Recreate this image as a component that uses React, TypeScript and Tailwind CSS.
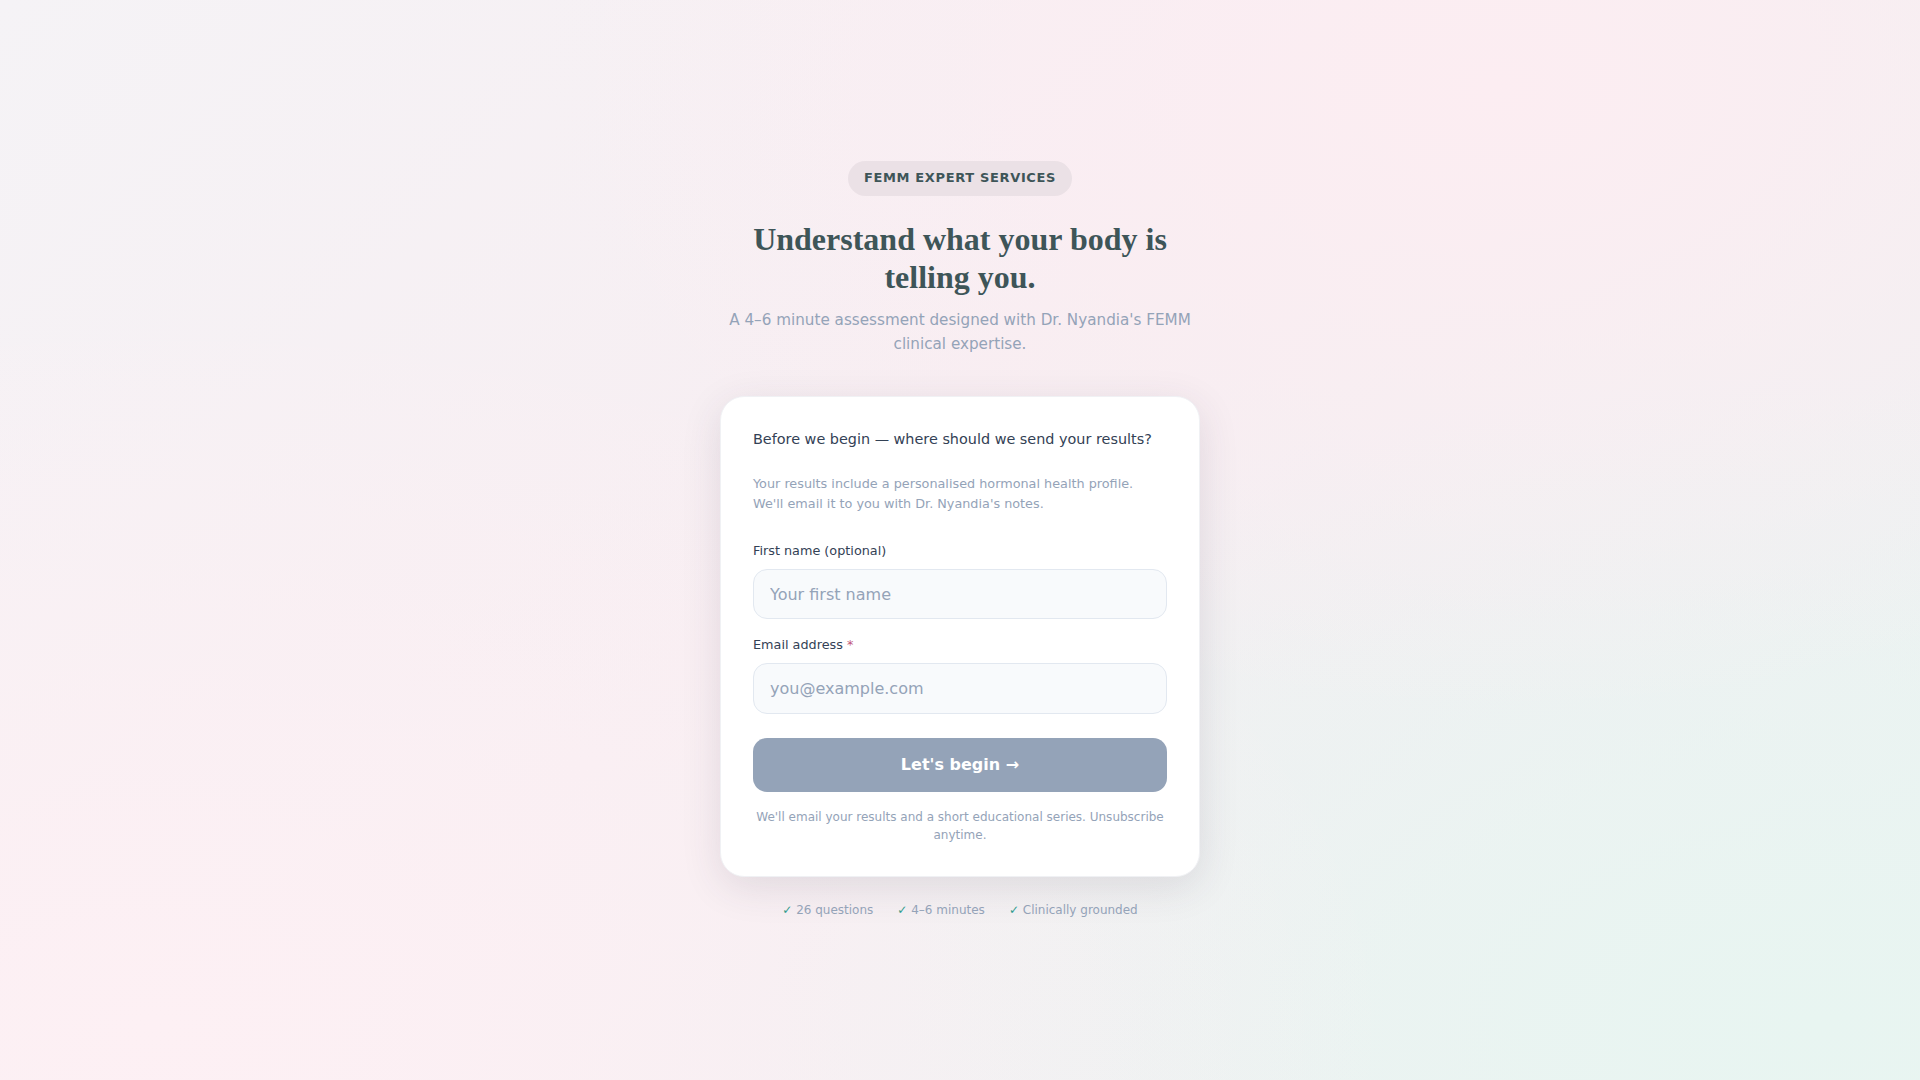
import React from "react";

export default function App() {
  return (
    <div className="min-h-screen w-full flex items-center justify-center bg-[radial-gradient(ellipse_at_78%_8%,#fcedf2_0%,transparent_45%),radial-gradient(ellipse_at_8%_95%,#fdf0f4_0%,transparent_50%),radial-gradient(ellipse_at_95%_95%,#e8f5f1_0%,transparent_45%),linear-gradient(135deg,#f5f3f6_0%,#f7eef2_45%,#f0f0f2_75%,#ebf3f2_100%)] font-['DejaVu_Sans',sans-serif]">
      <div className="w-[480px] flex flex-col items-center">
        <div className="rounded-full bg-[#ebe1e6] px-4 h-[35px] flex items-center text-[13px] font-bold tracking-[0.05em] text-[#3e5558]">
          FEMM EXPERT SERVICES
        </div>
        <h1 className="mt-6 text-center font-['Liberation_Serif',serif] font-bold text-[32px] leading-[1.2] text-[#3e5558]">
          Understand what your body is telling you.
        </h1>
        <p className="mt-3 text-center text-[15.2px] leading-6 text-[#94a3b8]">
          A 4–6 minute assessment designed with Dr. Nyandia's FEMM clinical expertise.
        </p>
        <div className="mt-10 w-full rounded-3xl bg-white p-8 border border-[#f0f1f4] shadow-[0_10px_40px_rgba(60,50,70,0.12)]">
          <p className="text-[14.4px] leading-5 text-[#334155]">
            Before we begin — where should we send your results?
          </p>
          <p className="mt-[25px] text-[12.8px] leading-5 text-[#94a3b8]">
            Your results include a personalised hormonal health profile. We'll email it to you with Dr. Nyandia's notes.
          </p>
          <div className="mt-[27px]">
            <label className="block text-[12.8px] leading-5 text-[#334155]">First name (optional)</label>
            <input
              type="text"
              placeholder="Your first name"
              className="mt-2 block w-full h-[50px] rounded-[14px] border border-[#e2e8f0] bg-[#f8fafc] px-4 text-[16px] text-[#334155] placeholder:text-[#94a3b8] outline-none"
            />
          </div>
          <div className="mt-4">
            <label className="block text-[12.8px] leading-5 text-[#334155]">
              Email address <span className="text-[#c2577a]">*</span>
            </label>
            <input
              type="email"
              placeholder="you@example.com"
              className="mt-2 block w-full h-[51px] rounded-[14px] border border-[#e2e8f0] bg-[#f8fafc] px-4 text-[16px] text-[#334155] placeholder:text-[#94a3b8] outline-none"
            />
          </div>
          <button
            type="button"
            className="mt-6 w-full h-[54px] rounded-[14px] bg-[#94a3b8] text-white text-[16px] font-bold"
          >
            Let's begin →
          </button>
          <p className="mt-4 text-center text-[12px] leading-[18px] text-[#94a3b8]">
            We'll email your results and a short educational series. Unsubscribe anytime.
          </p>
        </div>
        <div className="mt-6 flex items-center gap-6 text-[12px] leading-[18px] text-[#94a3b8]">
          <span><span className="text-[#2f9b8c]">✓</span> 26 questions</span>
          <span><span className="text-[#2f9b8c]">✓</span> 4–6 minutes</span>
          <span><span className="text-[#2f9b8c]">✓</span> Clinically grounded</span>
        </div>
      </div>
    </div>
  );
}
